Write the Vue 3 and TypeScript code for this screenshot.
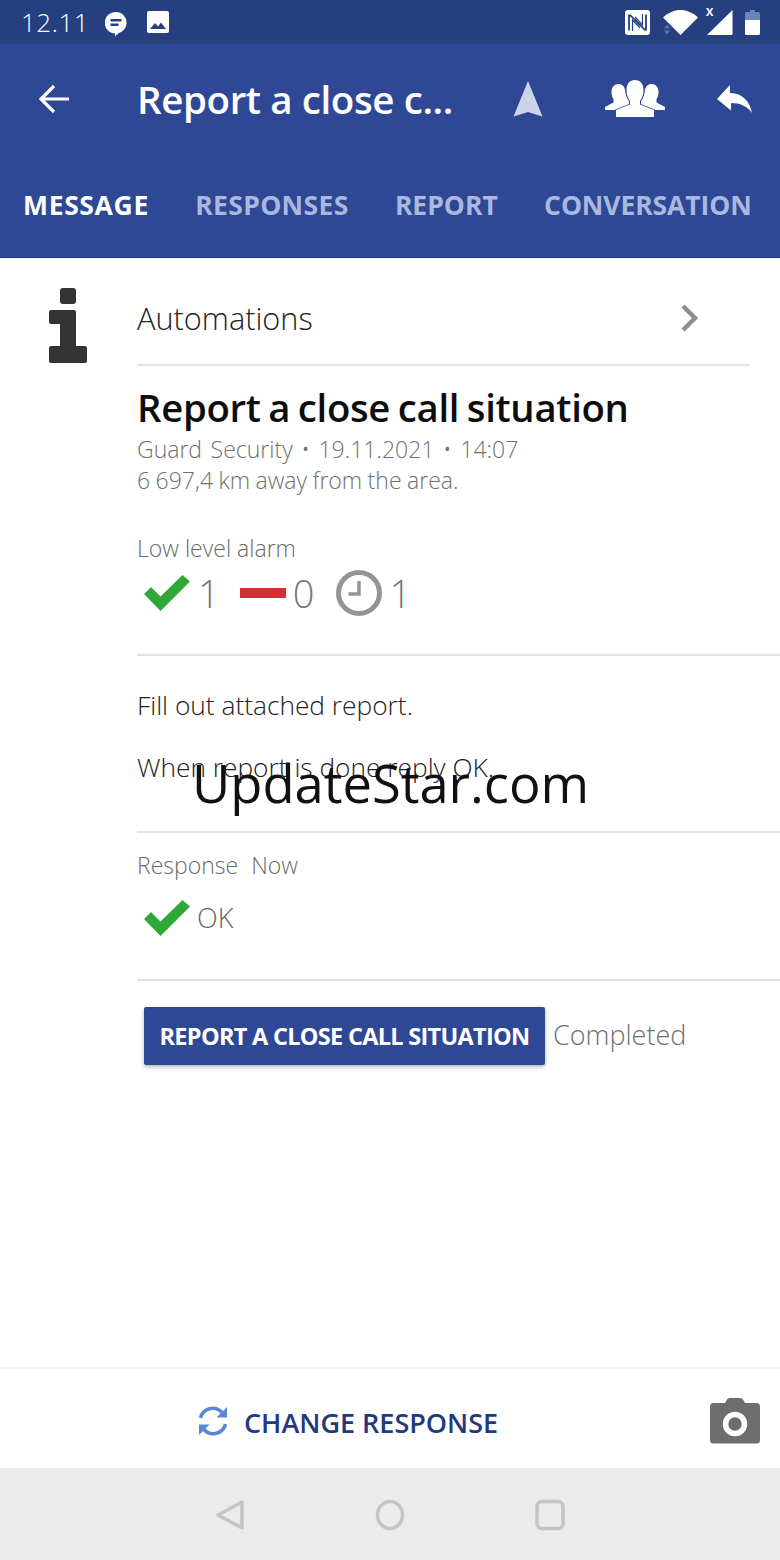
<script setup lang="ts">
const tabs = ['MESSAGE', 'RESPONSES', 'REPORT', 'CONVERSATION']
</script>

<template>
  <div class="screen">
    <div class="status">
      <span class="clock">12.11</span>
      <svg class="st-msg" width="22" height="26" viewBox="0 0 22 26">
        <path d="M11 1a10.500 10.500 0 0 1 10.500 11c0 5.200-3.800 9-7.800 10L10 25.500V22.500A10.500 10.500 0 0 1 11 1z" fill="#fff" />
        <path d="M5.500 8h11v2.500h-11zM5.500 12.500h8V15h-8z" fill="#253f7f" />
      </svg>
      <svg class="st-img" width="22" height="22" viewBox="0 0 22 22">
        <rect width="22" height="22" rx="2" fill="#fff" />
        <path d="M3 18l5-6 3 3.500 3-4 5 6.500z" fill="#253f7f" />
      </svg>
      <span class="spacer"></span>
      <svg width="25" height="25" viewBox="0 0 25 25">
        <rect width="25" height="25" rx="3" fill="#fff" />
        <path d="M4 20.500V5.500h1.500L15 15.500M21 4.500v15h-1.500L10 9.500" fill="none" stroke="#253f7f" stroke-width="1.800" />
        <path d="M7.500 21V10l7.500 8M17.500 4v11l-7.500-8" fill="none" stroke="#253f7f" stroke-width="1.200" />
      </svg>
      <svg class="st-wifi" width="35" height="26" viewBox="0 0 35 26">
        <path d="M0 7.500C5 2.500 12 0 17.500 0S30 2.500 35 7.500L17.500 25z" fill="#fff" />
        <path d="M4 14.500l-3 4h6zM4 24.500l-3-4h6z" fill="#5d75ad" />
      </svg>
      <span class="st-signal">
        <span class="st-x">X</span>
        <svg width="26" height="25" viewBox="0 0 26 25">
          <path d="M25.500 0v24a1 1 0 0 1-1 1H0z" fill="#fff" />
        </svg>
      </span>
      <svg class="st-bat" width="15" height="25" viewBox="0 0 15 25">
        <path d="M5 0h5v2h3.500a1.500 1.500 0 0 1 1.500 1.500V10H0V3.500A1.500 1.500 0 0 1 1.500 2H5z" fill="#6f84b5" />
        <path d="M0 10h15v13.500a1.500 1.500 0 0 1-1.500 1.500h-12A1.500 1.500 0 0 1 0 23.500z" fill="#fff" />
      </svg>
    </div>

    <header class="appbar">
      <div class="toolbar">
        <svg class="back" width="32" height="30" viewBox="0 0 32 30">
          <path d="M31 15H3M16 2L3 15l13 13" fill="none" stroke="#fff" stroke-width="3.200" />
        </svg>
        <h1 class="bar-title">Report a close c...</h1>
        <svg class="nav-arrow" width="30" height="36" viewBox="0 0 30 36">
          <path d="M15 0l14.500 35.500L15 31 .5 35.500z" fill="#ccd4e8" />
        </svg>
        <svg class="group" width="60" height="38" viewBox="0 0 60 38">
          <path d="M13.500 4c3.500 0 6 2.500 6.500 6 .5 4 1.500 8 4 11v4l-13 5H0v-3l8.500-4.500V19C7 17 6.500 14.500 6.500 12c0-5 3-8 7-8z" fill="#fff" />
          <path transform="matrix(-1 0 0 1 60 0)" d="M13.500 4c3.500 0 6 2.500 6.500 6 .5 4 1.500 8 4 11v4l-13 5H0v-3l8.500-4.500V19C7 17 6.500 14.500 6.500 12c0-5 3-8 7-8z" fill="#fff" />
          <path d="M30 0c5.500 0 8.500 4 8.500 10 0 4-1.200 8-3.500 11v3.500L49 30v7H11v-7l14-5.500V21c-2.300-3-3.500-7-3.500-11C21.500 4 24.500 0 30 0z" fill="#fff" stroke="#2e4896" stroke-width="1.500" paint-order="stroke" />
        </svg>
        <svg class="reply" width="36" height="28" viewBox="0 0 36 28">
          <path d="M13 0v8C26 8 33 17 35 28c-5-7-12-10-21-10v7.500L0 14z" fill="#fff" />
        </svg>
      </div>
      <nav class="tabs">
        <span v-for="(t, i) in tabs" :key="t" :class="['tab', { 'tab--active': i === 0 }]">{{ t }}</span>
      </nav>
    </header>

    <main class="content">
      <div class="auto-row">
        <svg class="info" width="38" height="76" viewBox="0 0 38 76">
          <rect x="11" width="16" height="16" rx="3" fill="#333" />
          <path d="M2 22h23a2 2 0 0 1 2 2v34h9a2 2 0 0 1 2 2v13a2 2 0 0 1-2 2H2a2 2 0 0 1-2-2V60a2 2 0 0 1 2-2h9V36H2a2 2 0 0 1-2-2V24a2 2 0 0 1 2-2z" fill="#333" />
        </svg>
        <div class="auto-link">
          <span class="auto-label">Automations</span>
          <svg width="20" height="30" viewBox="0 0 20 30">
            <path d="M3 3l12 12L3 27" fill="none" stroke="#8e8e8e" stroke-width="4.500" />
          </svg>
        </div>
      </div>

      <section class="block block--head">
        <h2 class="title">Report a close call situation</h2>
        <p class="meta meta--wide">Guard Security • 19.11.2021 • 14:07</p>
        <p class="meta">6 697,4 km away from the area.</p>
        <p class="caption caption--alarm">Low level alarm</p>
        <div class="stats">
          <svg class="check" width="46" height="36" viewBox="0 0 46 36">
            <path d="M0 19l7-7 9.500 9.500L38.500 0 46 6.500 16.500 36z" fill="#2fa838" />
          </svg>
          <span class="num num--one">1</span>
          <span class="dash"></span>
          <span class="num num--zero">0</span>
          <svg class="clock-icon" width="46" height="46" viewBox="0 0 46 46">
            <circle cx="23" cy="23" r="20.500" fill="none" stroke="#949494" stroke-width="5" />
            <path d="M23 11v13H12.500" fill="none" stroke="#949494" stroke-width="3.500" />
          </svg>
          <span class="num num--last">1</span>
        </div>
      </section>

      <section class="block block--body">
        <p class="body-text">Fill out attached report.</p>
        <p class="body-text body-text--next">When report is done reply OK.</p>
      </section>

      <section class="block block--resp">
        <p class="caption"><span class="caption-gap">Response</span>Now</p>
        <div class="resp-row">
          <svg class="check" width="46" height="36" viewBox="0 0 46 36">
            <path d="M0 19l7-7 9.500 9.500L38.500 0 46 6.500 16.500 36z" fill="#2fa838" />
          </svg>
          <span class="resp-ok">OK</span>
        </div>
      </section>

      <section class="block block--action">
        <button class="report-btn" type="button">REPORT A CLOSE CALL SITUATION</button>
        <span class="completed">Completed</span>
      </section>
    </main>

    <footer class="actions">
      <div class="change">
        <svg width="32" height="32" viewBox="0 0 32 32">
          <path d="M3.500 13A12.500 12.500 0 0 1 25 7.500M28.500 19A12.500 12.500 0 0 1 7 24.500" fill="none" stroke="#5b87d9" stroke-width="3.600" />
          <path d="M30 2v10.500H19.500zM2 30V19.500h10.500z" fill="#5b87d9" />
        </svg>
        <span class="change-label">CHANGE RESPONSE</span>
      </div>
      <svg class="camera" width="50" height="46" viewBox="0 0 50 46">
        <path d="M15 5l2-3.500A3 3 0 0 1 19.500 0h11A3 3 0 0 1 33 1.500L35 5h11.500A3.500 3.500 0 0 1 50 8.500V42a3.500 3.500 0 0 1-3.500 3.500h-43A3.500 3.500 0 0 1 0 42V8.500A3.500 3.500 0 0 1 3.500 5z" fill="#6e6e6e" />
        <circle cx="25" cy="26" r="9.500" fill="none" stroke="#fff" stroke-width="5.500" />
      </svg>
    </footer>

    <div class="navbar">
      <svg width="30" height="32" viewBox="0 0 30 32">
        <path d="M27 3v26L3 16z" fill="none" stroke="#c4c4c4" stroke-width="3.500" stroke-linejoin="round" />
      </svg>
      <svg width="30" height="32" viewBox="0 0 30 32">
        <ellipse cx="15" cy="16" rx="12.500" ry="13.500" fill="none" stroke="#c4c4c4" stroke-width="3.500" />
      </svg>
      <svg width="30" height="32" viewBox="0 0 30 32">
        <rect x="2" y="2.500" width="26" height="27" rx="5" fill="none" stroke="#c4c4c4" stroke-width="3.500" />
      </svg>
    </div>

    <div class="watermark">UpdateStar.com</div>
  </div>
</template>

<style scoped>
.screen {
  position: relative;
  width: 780px;
  height: 1560px;
  display: flex;
  flex-direction: column;
  background: #fff;
  font-family: 'Open Sans', sans-serif;
  overflow: hidden;
}

.status {
  height: 44px;
  flex: none;
  display: flex;
  align-items: center;
  padding: 0 20px 0 21px;
  background: #253f7f;
  color: #fff;
}

.clock {
  font-size: 26px;
  font-weight: 300;
  letter-spacing: 0.5px;
  margin-right: 16px;
}

.st-msg {
  margin: 3px 20px 0 0;
}

.spacer {
  flex: 1;
}

.st-wifi {
  margin: 2px 0 0 13px;
}

.st-signal {
  position: relative;
  display: flex;
  margin: 0 12px 0 9px;
}

.st-x {
  position: absolute;
  left: -1px;
  top: -6px;
  font-size: 11px;
  font-weight: 700;
}

.appbar {
  height: 214px;
  flex: none;
  display: flex;
  flex-direction: column;
  background: #2e4896;
  border-bottom: 1px solid #1f3a80;
  box-sizing: border-box;
}

.toolbar {
  height: 110px;
  display: flex;
  align-items: center;
  padding-left: 38px;
}

.back {
  margin-right: 67px;
}

.bar-title {
  width: 376px;
  margin: 0;
  font-size: 38.500px;
  font-weight: 600;
  letter-spacing: -0.4px;
  color: #fff;
  white-space: nowrap;
}

.nav-arrow {
  margin-right: 62px;
}

.group {
  margin-right: 52px;
}

.tabs {
  display: flex;
  padding: 33px 0 0 23px;
  gap: 46.3px;
}

.tab {
  font-size: 26.500px;
  font-weight: 700;
  color: #aab8de;
}

.tab:nth-child(2) {
  letter-spacing: 0.35px;
}

.tab:nth-child(4) {
  letter-spacing: -0.1px;
}

.tab--active {
  letter-spacing: 0.65px;
  color: #fff;
}

.content {
  flex: 1;
  display: flex;
  flex-direction: column;
}

.auto-row {
  display: flex;
  height: 108px;
  padding-left: 49px;
}

.info {
  margin: 30px 50px 0 0;
}

.auto-link {
  width: 613px;
  height: 108px;
  display: flex;
  align-items: center;
  justify-content: space-between;
  padding: 13px 50px 0 0;
  box-sizing: border-box;
  border-bottom: 2px solid #e3e3e3;
}

.auto-label {
  font-size: 30.700px;
  font-weight: 300;
  color: #222;
}

.block {
  margin-left: 137px;
  box-sizing: border-box;
  border-bottom: 2px solid #e3e3e3;
}

.block--head {
  height: 290px;
  padding-top: 18px;
}

.title {
  margin: 0 0 4px;
  font-size: 38.300px;
  line-height: 46px;
  font-weight: 600;
  letter-spacing: -0.3px;
  word-spacing: -2px;
  color: #0d0d0d;
}

.meta {
  margin: 0;
  font-size: 23px;
  line-height: 31px;
  font-weight: 300;
  word-spacing: -0.5px;
  color: #6f6f6f;
}

.meta--wide {
  word-spacing: 2.600px;
}

.caption {
  margin: 0;
  font-size: 23px;
  line-height: 30px;
  font-weight: 300;
  color: #6a6a6a;
}

.caption--alarm {
  margin-top: 37px;
}

.caption-gap {
  margin-right: 13px;
}

.stats {
  display: flex;
  align-items: center;
  margin-top: 4px;
  padding-left: 7px;
}

.num {
  font-size: 38px;
  font-weight: 300;
  color: #777;
}

.num--one {
  margin-left: 8px;
}

.dash {
  width: 46px;
  height: 10px;
  margin-left: 20px;
  background: #cc3333;
}

.num--zero {
  margin-left: 7px;
}

.clock-icon {
  margin-left: 22px;
}

.num--last {
  margin-left: 7px;
}

.block--body {
  height: 177px;
  padding-top: 33px;
}

.body-text {
  margin: 0;
  font-size: 26.300px;
  line-height: 32px;
  font-weight: 300;
  color: #222;
}

.body-text--next {
  margin-top: 30px;
}

.block--resp {
  height: 148px;
  padding-top: 17px;
}

.resp-row {
  display: flex;
  align-items: center;
  margin-top: 19px;
  padding-left: 7px;
}

.resp-ok {
  margin-left: 7px;
  font-size: 27px;
  font-weight: 300;
  color: #666;
}

.block--action {
  display: flex;
  align-items: center;
  padding: 26px 0 0 7px;
  border-bottom: none;
}

.report-btn {
  width: 401px;
  height: 58px;
  padding: 0;
  border: none;
  border-radius: 2px;
  background: #2e4896;
  box-shadow: 0 2px 4px rgba(0, 0, 0, 0.3);
  color: #fff;
  font-family: inherit;
  font-size: 23.500px;
  font-weight: 700;
  letter-spacing: -0.7px;
  white-space: nowrap;
}

.completed {
  margin: 0 0 4px 8px;
  font-size: 27px;
  font-weight: 300;
  color: #6f6f6f;
}

.actions {
  height: 101px;
  flex: none;
  display: flex;
  align-items: center;
  justify-content: space-between;
  padding: 5px 20px 0 197px;
  box-sizing: border-box;
  border-top: 2px solid #f3f3f3;
}

.change {
  display: flex;
  align-items: center;
  gap: 15px;
}

.change-label {
  margin-top: 3px;
  font-size: 27px;
  font-weight: 600;
  color: #1f3a80;
}

.navbar {
  height: 91px;
  flex: none;
  display: flex;
  align-items: center;
  justify-content: center;
  gap: 130px;
  padding-top: 1px;
  background: #ebebeb;
}

.watermark {
  position: absolute;
  left: 192px;
  top: 748px;
  font-size: 52.500px;
  line-height: 70px;
  color: #111;
}
</style>
